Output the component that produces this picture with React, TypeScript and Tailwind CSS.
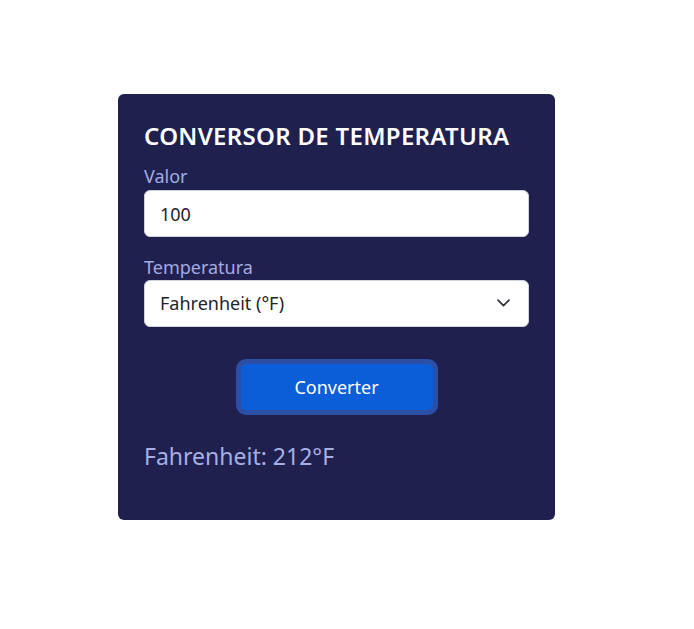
import React from "react";

export default function App() {
  return (
    <div
      className="min-h-[629px] w-full bg-white pt-[94px] pl-[118px]"
      style={{ fontFamily: '"Noto Sans", "Open Sans", sans-serif' }}
    >
      <div className="w-[437px] h-[426px] rounded-md bg-[#20204f] px-[26px] pt-[27px]">
        <h1 className="text-[24px] leading-[30px] font-semibold text-white tracking-[0.3px]">
          CONVERSOR DE TEMPERATURA
        </h1>
        <label className="mt-[13px] block text-[18px] leading-[24px] text-[#a2abe2]">
          Valor
        </label>
        <input
          defaultValue="100"
          className="mt-[2px] block h-[47px] w-full rounded-md border border-[#ced4da] bg-white px-[15px] text-[18px] text-[#212529] outline-none"
        />
        <label className="mt-[18px] block text-[18px] leading-[24px] text-[#a2abe2]">
          Temperatura
        </label>
        <div className="relative mt-[1px] flex h-[47px] w-full items-center rounded-md border border-[#ced4da] bg-white px-[15px] text-[18px] text-[#212529]">
          <span>Fahrenheit (°F)</span>
          <svg
            className="absolute right-[18px] top-[18px]"
            width="13"
            height="8"
            viewBox="0 0 13 8"
            fill="none"
          >
            <path d="M1 1.2l5.5 5.5 5.5-5.5" stroke="#343a40" strokeWidth="1.8" strokeLinecap="round" strokeLinejoin="round" />
          </svg>
        </div>
        <div className="mt-[32px] flex justify-center">
          <button className="h-[56px] w-[202px] rounded-[10px] border-[5px] border-[#2a4fa5] bg-[#0b5ed7] text-[18px] text-white">
            Converter
          </button>
        </div>
        <p className="mt-[26px] text-[23px] leading-[30px] text-[#a6afe3]">
          Fahrenheit: 212°F
        </p>
      </div>
    </div>
  );
}
